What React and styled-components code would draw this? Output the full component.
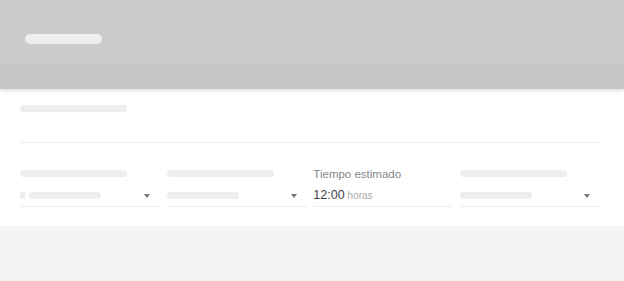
import React from "react";
import styled, { createGlobalStyle } from "styled-components";

const Global = createGlobalStyle`
  html, body { margin: 0; padding: 0; background: #f4f4f4; }
  body { font-family: "Liberation Sans", Arial, sans-serif; }
`;

const Page = styled.div`
  width: 624px;
  min-height: 281px;
  background: #f4f4f4;
`;

const Header = styled.header`
  height: 64px;
  background: #cccccc;
  padding: 34px 0 0 25px;
  box-sizing: border-box;
`;

const TabBar = styled.div`
  height: 25px;
  background: #c6c6c6;
  box-shadow: 0 2px 4px rgba(0, 0, 0, 0.12);
  position: relative;
  z-index: 1;
`;

const Pill = styled.div`
  width: ${(p) => p.$w}px;
  height: ${(p) => p.$h || 7}px;
  border-radius: ${(p) => (p.$h || 7) / 2}px;
  background: ${(p) => p.$c || "#eeeeee"};
  flex-shrink: 0;
`;

const Card = styled.section`
  background: #ffffff;
  padding: 16px 24px 19px 20px;
`;

const WideField = styled.div`
  height: 37px;
  border-bottom: 1px solid #eeeeee;
`;

const Grid = styled.div`
  display: grid;
  grid-template-columns: repeat(4, 1fr);
  column-gap: 6.67px;
  margin-top: 25px;
`;

const Field = styled.div`
  display: flex;
  flex-direction: column;
  min-width: 0;
`;

const Label = styled.div`
  height: 14px;
  display: flex;
  align-items: flex-start;
  padding-top: ${(p) => (p.$text ? 0 : 2)}px;
  box-sizing: border-box;
  font-size: 11.5px;
  line-height: ${(p) => (p.$text ? 12 : 14)}px;
  color: #888888;
  white-space: nowrap;
`;

const Value = styled.div`
  margin-top: 3px;
  height: 21px;
  display: flex;
  align-items: center;
  border-bottom: 1px solid #eeeeee;
  padding-right: 10px;
  gap: 4px;
`;

const Square = styled.div`
  width: 5px;
  height: 7px;
  background: #eeeeee;
  flex-shrink: 0;
`;

const Spacer = styled.div`
  flex: 1;
`;

const Arrow = styled.div`
  width: 0;
  height: 0;
  border-left: 3px solid transparent;
  border-right: 3px solid transparent;
  border-top: 4px solid #777777;
  margin-top: 1px;
`;

const TimeText = styled.div`
  display: flex;
  align-items: baseline;
  gap: 4px;
  margin-bottom: 2px;
`;

const Time = styled.span`
  font-size: 12.5px;
  color: #3b3f47;
`;

const Unit = styled.span`
  font-size: 10px;
  color: #aaaaaa;
  margin-left: -1px;
`;

function SelectField({ square }) {
  return (
    <Field>
      <Label>
        <Pill $w={107} />
      </Label>
      <Value>
        {square && <Square />}
        <Pill $w={72} />
        <Spacer />
        <Arrow />
      </Value>
    </Field>
  );
}

export default function App() {
  return (
    <Page>
      <Global />
      <Header>
        <Pill $w={77} $h={10} $c="#efefef" />
      </Header>
      <TabBar />
      <Card>
        <WideField>
          <Pill $w={107} />
        </WideField>
        <Grid>
          <SelectField square />
          <SelectField />
          <Field>
            <Label $text>Tiempo estimado</Label>
            <Value>
              <TimeText>
                <Time>12:00</Time>
                <Unit>horas</Unit>
              </TimeText>
            </Value>
          </Field>
          <SelectField />
        </Grid>
      </Card>
    </Page>
  );
}
